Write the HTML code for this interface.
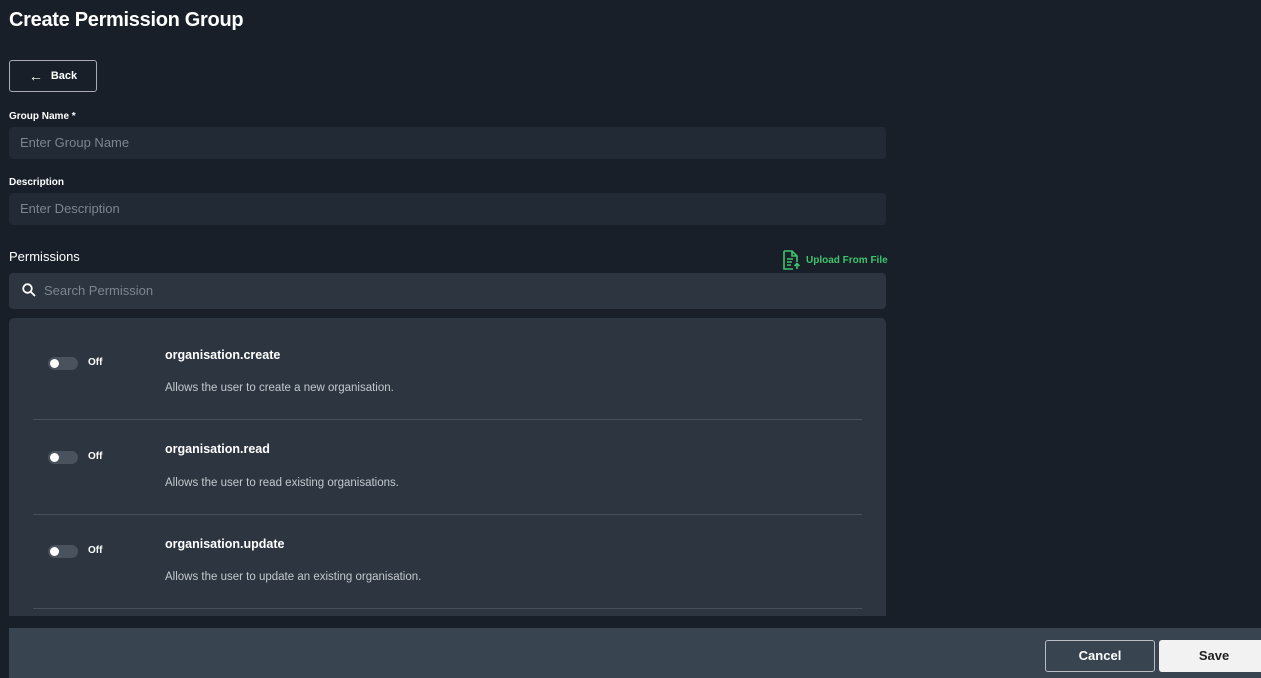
<!DOCTYPE html><html><head><style>
body{margin:0;width:1261px;height:678px;background:#181f29;font-family:"Liberation Sans",sans-serif;color:#fff;position:relative;overflow:hidden}
.a{position:absolute}
h1{position:absolute;left:9px;top:9px;margin:0;font-size:20px;font-weight:bold;letter-spacing:-0.3px}
.back{left:9px;top:60px;width:88px;height:32px;border:1px solid #aab;border-radius:3px;font-size:11px;font-weight:bold;box-sizing:border-box;display:flex;align-items:center;justify-content:center;gap:8px}
.lbl{font-size:10px;font-weight:bold;left:9px}
.inp{left:9px;width:877px;height:32px;background:#222b35;border-radius:4px;color:#7c8590;font-size:13px;line-height:32px;text-indent:11px}
.card{left:9px;top:318px;width:877px;height:298px;background:#2d3640;border-radius:5px 5px 0 0}
.tg{left:48px;width:30px;height:13px;border-radius:7px;background:#4a535d}
.tg:after{content:"";position:absolute;left:2px;top:2px;width:9px;height:9px;border-radius:50%;background:#fff}
.off{left:88px;font-size:10px;font-weight:bold}
.t{left:165px;font-size:12.5px;font-weight:bold}
.d{left:165px;font-size:11.5px;color:#c3c8ce}
.hr{left:33px;width:829px;height:1px;background:#48515b}
</style></head><body>
<h1>Create Permission Group</h1>
<div class="a back"><span style="font-size:14px;font-weight:normal;line-height:1">←</span>Back</div>
<div class="a lbl" style="top:111px">Group Name *</div>
<div class="a inp" style="top:127px">Enter Group Name</div>
<div class="a lbl" style="top:177px">Description</div>
<div class="a inp" style="top:193px">Enter Description</div>
<div class="a" style="left:9px;top:249px;font-size:13px">Permissions</div>
<div class="a" style="left:782px;top:250px;color:#3ec46d;font-size:10px;font-weight:bold;display:flex;align-items:center;gap:5px"><svg width="19" height="20" viewBox="0 0 19 20" fill="none" stroke="#3ec46d" stroke-width="1.6"><path d="M2 1h8l5 5v6M2 1v18h9M10 1v5h5M5 9h6M5 12h5M5 15h4M15 19v-5M12.5 16l2.5-2.5 2.5 2.5"/></svg>Upload From File</div>
<div class="a inp" style="top:273px;height:36px;line-height:36px;background:#2c3540;text-indent:35px">Search Permission</div>
<svg class="a" style="left:22px;top:283px" width="14" height="14" viewBox="0 0 14 14" fill="none" stroke="#fff" stroke-width="1.8"><circle cx="5.5" cy="5.5" r="4.3"/><path d="M8.7 8.7L13 13"/></svg>
<div class="a card"></div>
<div class="a tg" style="top:357px"></div><div class="a off" style="top:357px">Off</div>
<div class="a t" style="top:348px">organisation.create</div><div class="a d" style="top:382px">Allows the user to create a new organisation.</div>
<div class="a hr" style="top:419px"></div>
<div class="a tg" style="top:451px"></div><div class="a off" style="top:451px">Off</div>
<div class="a t" style="top:442px">organisation.read</div><div class="a d" style="top:477px">Allows the user to read existing organisations.</div>
<div class="a hr" style="top:514px"></div>
<div class="a tg" style="top:545px"></div><div class="a off" style="top:545px">Off</div>
<div class="a t" style="top:537px">organisation.update</div><div class="a d" style="top:571px">Allows the user to update an existing organisation.</div>
<div class="a hr" style="top:608px"></div>
<div class="a" style="left:9px;top:628px;width:1252px;height:50px;background:#38444f"></div>
<div class="a" style="left:1045px;top:640px;width:110px;height:32px;box-sizing:border-box;border:1px solid #b8bec4;border-radius:3px;text-align:center;line-height:30px;font-size:13px;font-weight:bold">Cancel</div>
<div class="a" style="left:1159px;top:640px;width:110px;height:32px;background:#f2f2f2;border-radius:3px;text-align:center;line-height:32px;font-size:13px;font-weight:bold;color:#222">Save</div>
</body></html>
